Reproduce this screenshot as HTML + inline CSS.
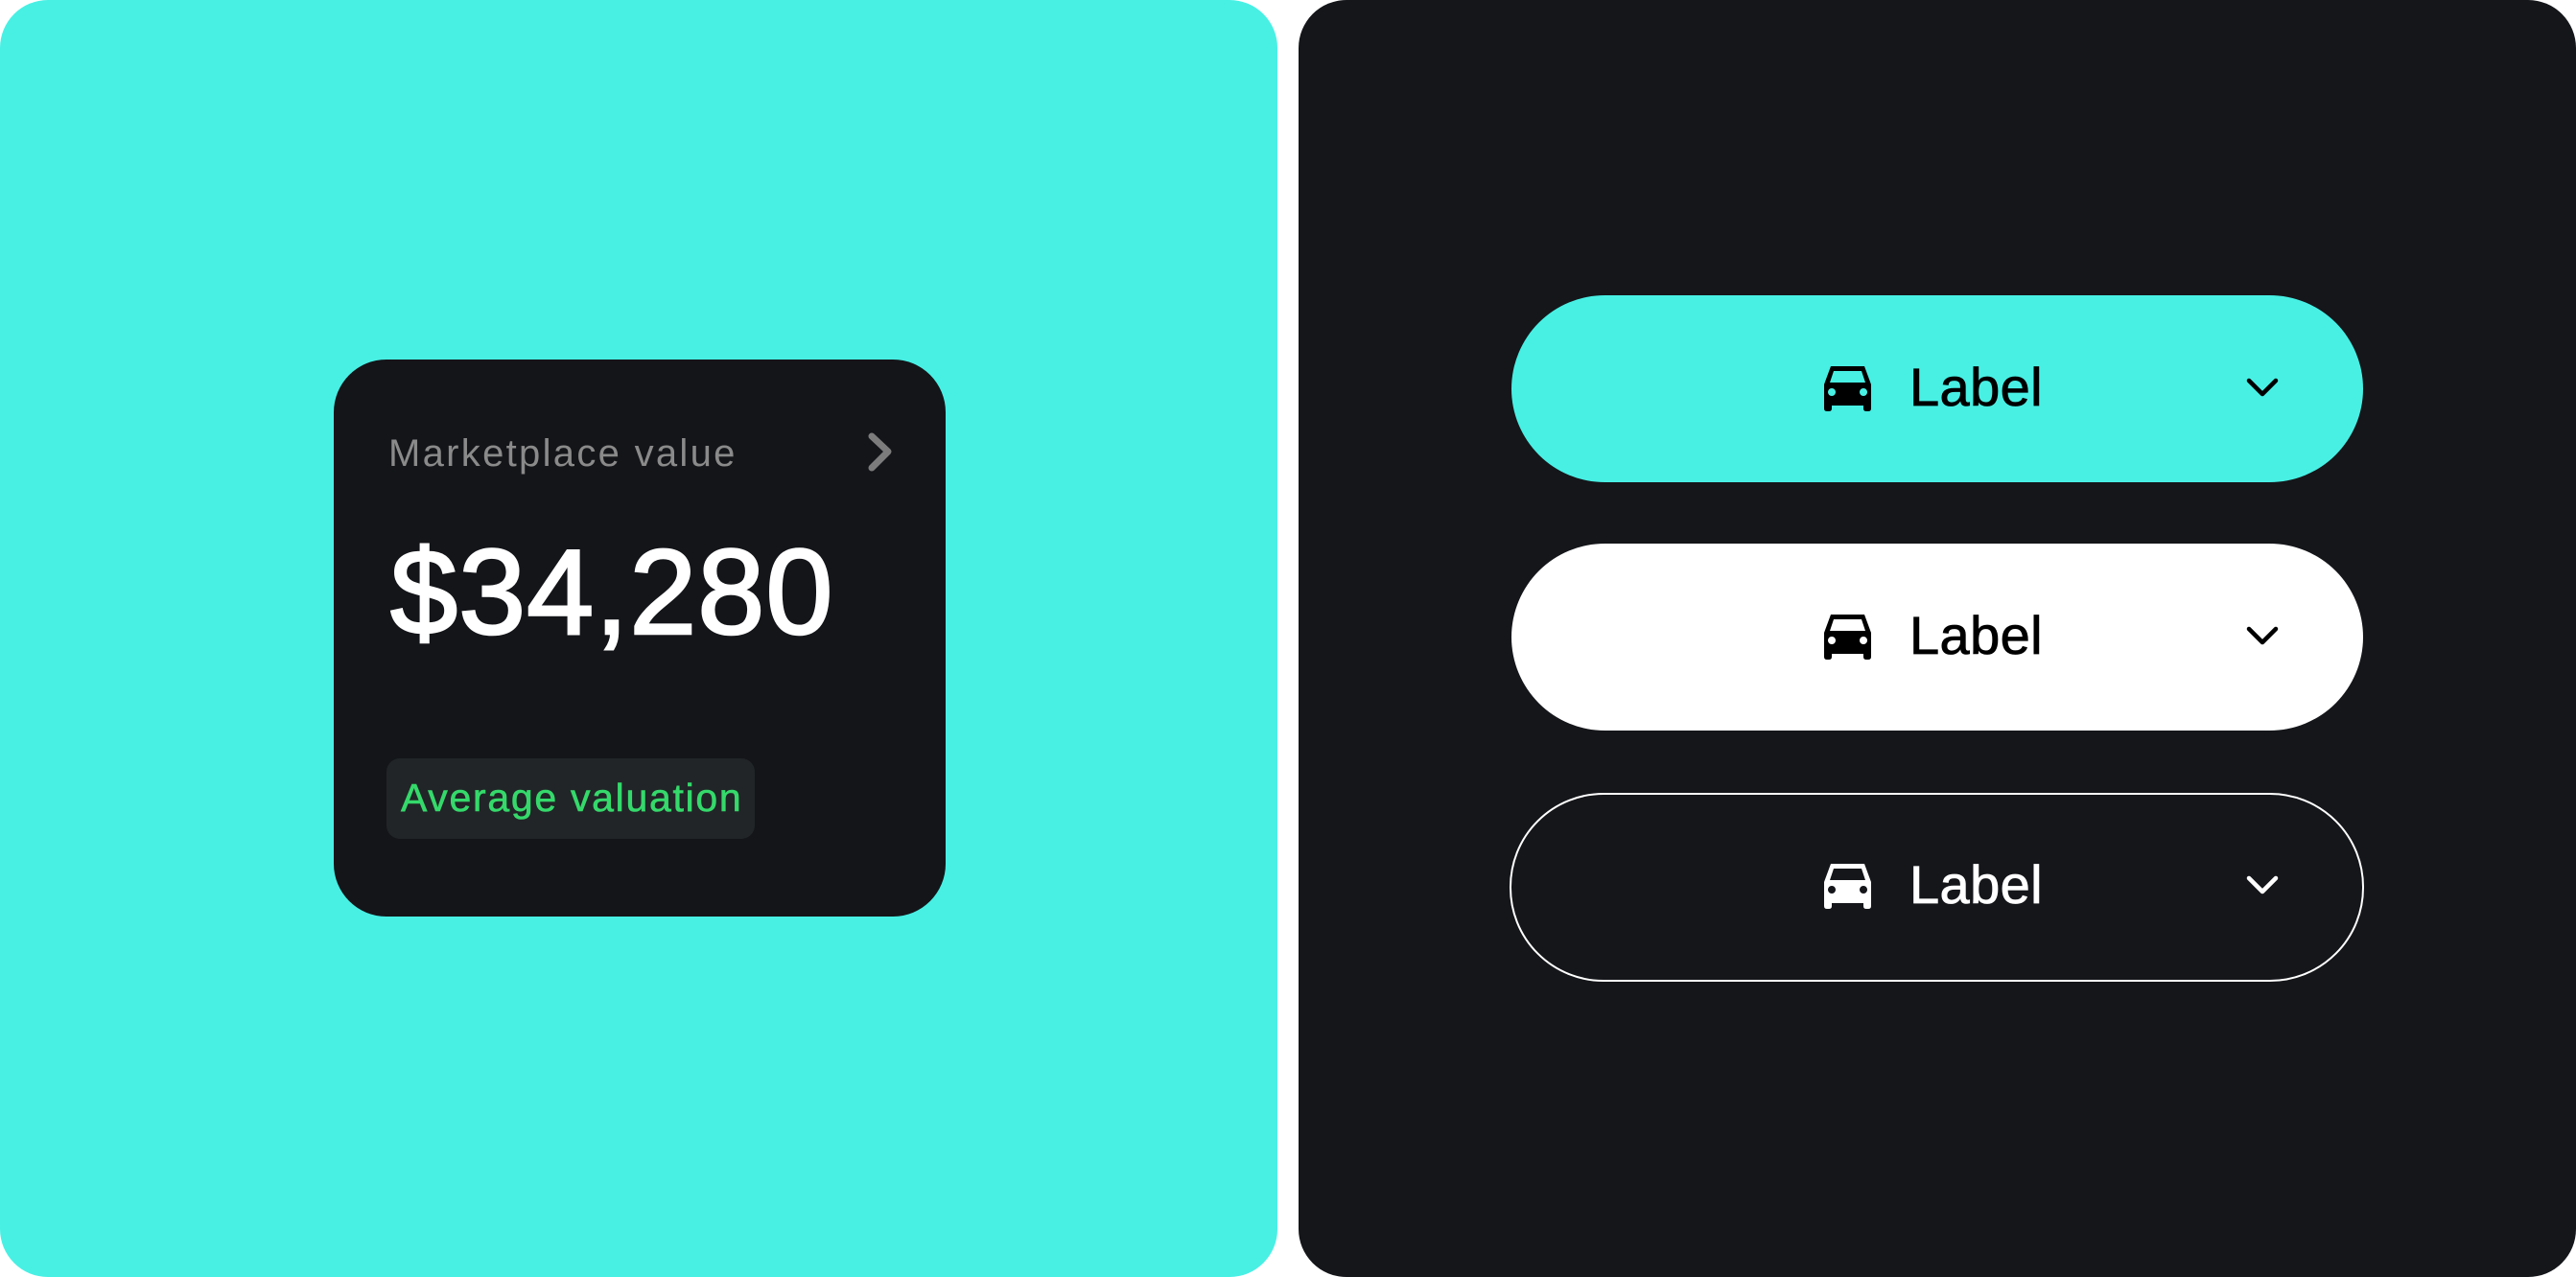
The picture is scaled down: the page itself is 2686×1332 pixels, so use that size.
<!DOCTYPE html>
<html><head><meta charset="utf-8"><style>
html,body{margin:0;padding:0;width:2686px;height:1332px;background:#fff;overflow:hidden;font-family:"Liberation Sans",sans-serif;}
.l{position:absolute;left:0;top:0;width:1332px;height:1332px;background:#48f0e4;border-radius:50px;}
.r{position:absolute;left:1354px;top:0;width:1332px;height:1332px;background:#15161a;border-radius:50px;}
.card{position:absolute;left:348px;top:375px;width:638px;height:581px;background:#141519;border-radius:55px;}
.mv{position:absolute;left:405px;top:449px;font-size:40px;color:#8a8a8a;line-height:48px;letter-spacing:2.3px;white-space:nowrap;}
.num{position:absolute;left:407px;top:548px;font-size:126px;color:#fff;line-height:140px;-webkit-text-stroke:2.5px #fff;letter-spacing:1px;}
.badge{position:absolute;left:403px;top:791px;width:384px;height:84px;background:#212527;border-radius:14px;}
.badge span{position:absolute;left:15px;top:17px;font-size:41px;line-height:48px;color:#35d96b;white-space:nowrap;letter-spacing:1.7px;-webkit-text-stroke:0.6px #35d96b;}
.btn{position:absolute;left:1576px;width:888px;height:195px;border-radius:98px;box-sizing:border-box;}
.btn svg.car{position:absolute;left:324px;top:74px;}
.btn .t{position:absolute;left:415px;top:64px;font-size:56px;line-height:64px;-webkit-text-stroke:0.8px currentColor;letter-spacing:0.4px;}
.btn svg.ch{position:absolute;left:765px;top:85px;}
</style></head><body>
<div class="l"></div>
<div class="r"></div>
<div class="card"></div>
<div class="mv">Marketplace value</div>
<svg style="position:absolute;left:890px;top:440px" width="60" height="60"><polyline points="19,15 36,31 19,48" fill="none" stroke="#7c7c7c" stroke-width="7" stroke-linecap="round" stroke-linejoin="round"/></svg>
<div class="num">$34,280</div>
<div class="badge"><span>Average valuation</span></div>

<div class="btn" style="top:308px;background:#48f0e4;color:#000;">
<svg class="car" width="53" height="47" viewBox="0 0 53 47"><path fill-rule="evenodd" fill="#000" d="M9 0H44L51 19V44Q51 47 48 47H46Q43 47 43 44V41H10V44Q10 47 7 47H5Q2 47 2 44V19ZM12 5L8 17H45L41 5ZM10 23A4 4 0 1 0 10.01 23ZM43 23A4 4 0 1 0 43.01 23Z"/></svg>
<div class="t">Label</div>
<svg class="ch" width="40" height="26"><polyline points="4,4 18,18 32,4" fill="none" stroke="#000" stroke-width="4.5" stroke-linecap="round" stroke-linejoin="round"/></svg>
</div>
<div class="btn" style="top:567px;background:#fff;color:#000;">
<svg class="car" width="53" height="47" viewBox="0 0 53 47"><path fill-rule="evenodd" fill="#000" d="M9 0H44L51 19V44Q51 47 48 47H46Q43 47 43 44V41H10V44Q10 47 7 47H5Q2 47 2 44V19ZM12 5L8 17H45L41 5ZM10 23A4 4 0 1 0 10.01 23ZM43 23A4 4 0 1 0 43.01 23Z"/></svg>
<div class="t">Label</div>
<svg class="ch" width="40" height="26"><polyline points="4,4 18,18 32,4" fill="none" stroke="#000" stroke-width="4.5" stroke-linecap="round" stroke-linejoin="round"/></svg>
</div>
<div class="btn" style="top:827px;left:1574px;width:891px;height:197px;border:2px solid #fff;color:#fff;">
<svg class="car" width="53" height="47" viewBox="0 0 53 47" style="left:324px;top:72px"><path fill-rule="evenodd" fill="#fff" d="M9 0H44L51 19V44Q51 47 48 47H46Q43 47 43 44V41H10V44Q10 47 7 47H5Q2 47 2 44V19ZM12 5L8 17H45L41 5ZM10 23A4 4 0 1 0 10.01 23ZM43 23A4 4 0 1 0 43.01 23Z"/></svg>
<div class="t" style="top:62px">Label</div>
<svg class="ch" width="40" height="26" style="top:83px"><polyline points="4,4 18,18 32,4" fill="none" stroke="#fff" stroke-width="4.5" stroke-linecap="round" stroke-linejoin="round"/></svg>
</div>
</body></html>
